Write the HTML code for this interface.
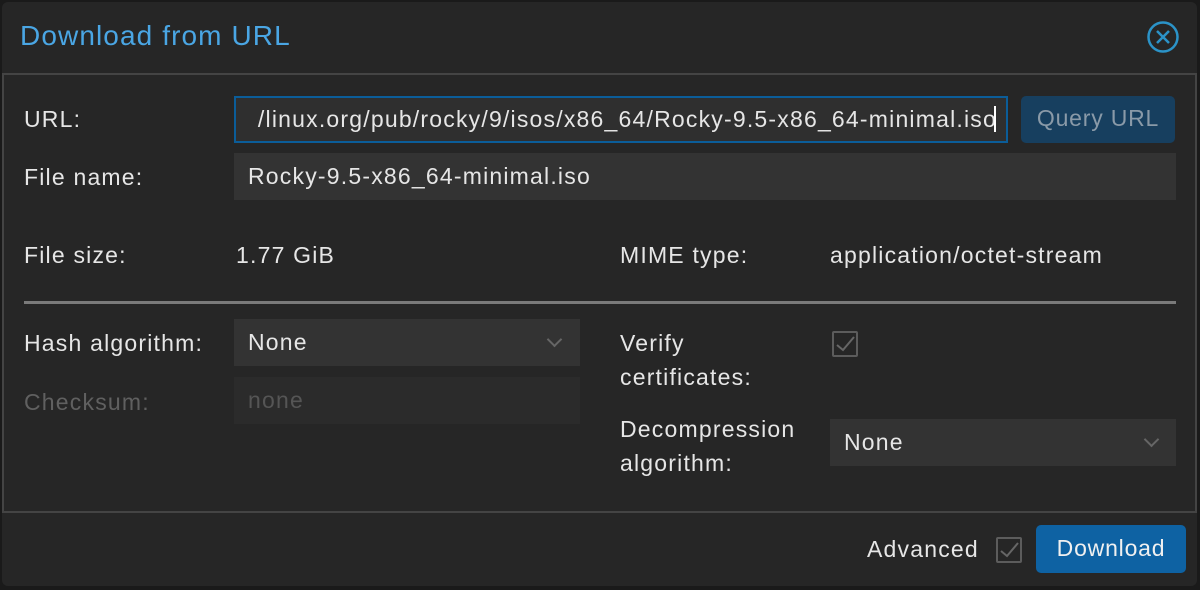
<!DOCTYPE html>
<html><head><style>
*{margin:0;padding:0;box-sizing:border-box}
body{width:1200px;height:590px;background:#1a1a1a;position:relative;overflow:hidden;font-family:"Liberation Sans",sans-serif;color:#e6e6e6;font-size:23px;letter-spacing:1.2px}
.win{position:absolute;left:2px;top:2px;width:1195px;height:584px;background:#262626;border-radius:6px}
.a{position:absolute;white-space:nowrap}
.field{position:absolute;background:#333;height:47px;line-height:47px;padding-left:14px;white-space:nowrap}
.lbl{position:absolute;line-height:34px;white-space:nowrap}
.chev{position:absolute;width:11px;height:11px;border-right:2px solid #666;border-bottom:2px solid #666;transform:rotate(45deg)}
.cb{position:absolute;width:26px;height:26px;border:2px solid #5c5c5c;border-radius:2px}
</style></head><body>
<div class="win"></div>
<div class="a" style="left:20px;top:20px;font-size:28px;letter-spacing:1.1px;color:#4aa6e4">Download from URL</div>
<svg class="a" style="left:1146px;top:20px" width="34" height="34" viewBox="0 0 34 34"><circle cx="17" cy="17" r="14.5" fill="none" stroke="#2b93c8" stroke-width="2.5"/><path d="M11 11L23 23M23 11L11 23" stroke="#2b93c8" stroke-width="2.5"/></svg>
<div class="a" style="left:2px;top:73px;width:1195px;height:440px;border:2px solid #444"></div>

<div class="lbl" style="left:24px;top:102px">URL:</div>
<div class="field" style="left:234px;top:96px;width:774px;border:2px solid #0b5d99;background:#2f2f2f;line-height:43px;overflow:hidden;padding:0">
<span style="position:absolute;right:10px;top:0">/linux.org/pub/rocky/9/isos/x86_64/Rocky-9.5-x86_64-minimal.iso<span style="display:inline-block;width:2px;height:26px;background:#fff;vertical-align:-5px;margin-left:-3px"></span></span></div>
<div class="a" style="left:1021px;top:96px;width:154px;height:47px;background:#173f5f;border-radius:5px;color:#8a9aa8;text-align:center;line-height:45px;letter-spacing:0.8px">Query URL</div>

<div class="lbl" style="left:24px;top:160px">File name:</div>
<div class="field" style="left:234px;top:153px;width:942px">Rocky-9.5-x86_64-minimal.iso</div>

<div class="lbl" style="left:24px;top:238px">File size:</div>
<div class="lbl" style="left:236px;top:238px">1.77 GiB</div>
<div class="lbl" style="left:620px;top:238px">MIME type:</div>
<div class="lbl" style="left:830px;top:238px">application/octet-stream</div>

<div class="a" style="left:24px;top:301px;width:1152px;height:3px;background:#7a7a7a"></div>

<div class="lbl" style="left:24px;top:326px">Hash algorithm:</div>
<div class="field" style="left:234px;top:319px;width:346px">None</div>
<div class="chev" style="left:549px;top:334px"></div>
<div class="lbl" style="left:24px;top:385px;color:#606060">Checksum:</div>
<div class="field" style="left:234px;top:377px;width:346px;background:#2b2b2b;color:#555">none</div>

<div class="lbl" style="left:620px;top:326px">Verify</div>
<div class="lbl" style="left:620px;top:360px">certificates:</div>
<div class="cb" style="left:832px;top:331px"></div>
<svg class="a" style="left:832px;top:331px" width="26" height="26"><path d="M5 14L11 19L22 6" fill="none" stroke="#666" stroke-width="2"/></svg>

<div class="lbl" style="left:620px;top:412px">Decompression</div>
<div class="lbl" style="left:620px;top:446px">algorithm:</div>
<div class="field" style="left:830px;top:419px;width:346px">None</div>
<div class="chev" style="left:1146px;top:434px"></div>

<div class="lbl" style="left:867px;top:532px">Advanced</div>
<div class="cb" style="left:996px;top:537px"></div>
<svg class="a" style="left:996px;top:537px" width="26" height="26"><path d="M5 14L11 19L22 6" fill="none" stroke="#666" stroke-width="2"/></svg>
<div class="a" style="left:1036px;top:525px;width:150px;height:48px;background:#0e62a3;border-radius:5px;text-align:center;line-height:46px;color:#f0f0f0;letter-spacing:0.8px">Download</div>
</body></html>
